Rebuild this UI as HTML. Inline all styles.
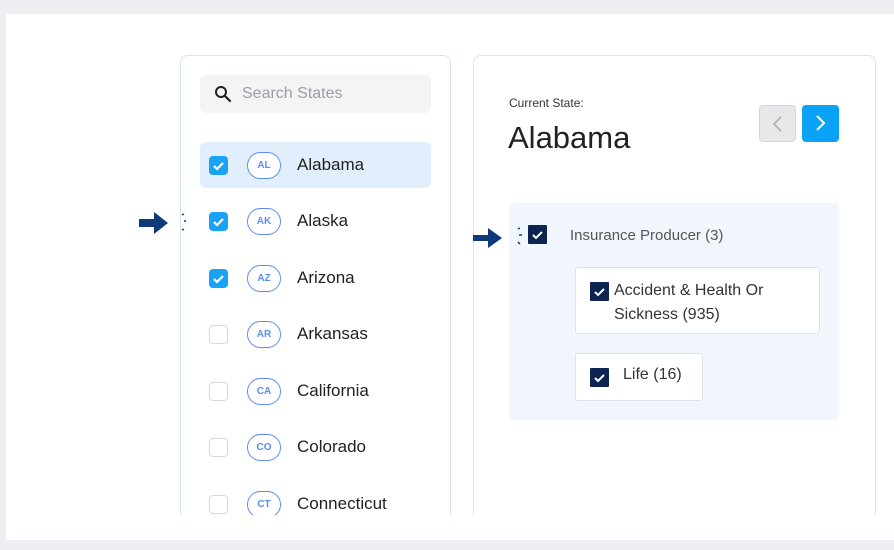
<!DOCTYPE html>
<html><head><style>
*{margin:0;padding:0;box-sizing:border-box}
body{width:894px;height:550px;background:#eceef2;font-family:"Liberation Sans",sans-serif;position:relative;overflow:hidden}
.card{position:absolute;left:6px;top:14px;width:888px;height:526px;background:#fff}
.clip{position:absolute;left:0;top:0;width:894px;height:515px;overflow:hidden}
.lp{position:absolute;left:180px;top:55px;width:271px;height:500px;border:1px solid #d6e4f2;border-radius:8px}
.rp{position:absolute;left:473px;top:55px;width:403px;height:500px;border:1px solid #dde3ea;border-radius:8px}
.search{position:absolute;left:200px;top:75px;width:231px;height:38px;background:#f3f4f6;border-radius:6px;color:#9a9ea5;font-size:16px;line-height:38px;padding-left:42px}
.row{position:absolute;left:200px;width:231px;height:46px;border-radius:6px}
.row.sel{background:#e1effd}
.cb{position:absolute;left:9px;top:14px;width:19px;height:19px;border-radius:4px;border:1px solid #d6d9de;background:#fff}
.cb.on{background:#1aa3f5;border-color:#1aa3f5}
.badge{position:absolute;left:47px;top:10px;width:34px;height:27px;border:1.5px solid #5b8ef0;border-radius:14px;font-size:10px;font-weight:bold;color:#5b8ef0;display:flex;align-items:center;justify-content:center}
.nm{position:absolute;left:97px;top:0;line-height:46px;font-size:17px;color:#222}
.dk{position:absolute;width:19px;height:19px;background:#0d2350;border-radius:1px}
</style></head><body>
<div class="card"></div>
<div class="clip">
<div class="lp"></div>
<div class="rp"></div>
<div class="search">Search States</div>
<svg style="position:absolute;left:214px;top:85px" width="18" height="18" viewBox="0 0 18 18"><circle cx="7" cy="7" r="5" fill="none" stroke="#222" stroke-width="2"/><path d="M11 11l5 5" stroke="#222" stroke-width="2.2" stroke-linecap="round"/></svg>

<div class="row sel" style="top:142px"><div class="cb on"><svg width="17" height="17" viewBox="0 0 17 17"><path d="M4 9l3 3 6-6" fill="none" stroke="#fff" stroke-width="2.2"/></svg></div><div class="badge" style="background:#fff">AL</div><div class="nm">Alabama</div></div>
<div class="row" style="top:198px"><div class="cb on"><svg width="17" height="17" viewBox="0 0 17 17"><path d="M4 9l3 3 6-6" fill="none" stroke="#fff" stroke-width="2.2"/></svg></div><div class="badge">AK</div><div class="nm">Alaska</div></div>
<div class="row" style="top:255px"><div class="cb on"><svg width="17" height="17" viewBox="0 0 17 17"><path d="M4 9l3 3 6-6" fill="none" stroke="#fff" stroke-width="2.2"/></svg></div><div class="badge">AZ</div><div class="nm">Arizona</div></div>
<div class="row" style="top:311px"><div class="cb"></div><div class="badge">AR</div><div class="nm">Arkansas</div></div>
<div class="row" style="top:368px"><div class="cb"></div><div class="badge">CA</div><div class="nm">California</div></div>
<div class="row" style="top:424px"><div class="cb"></div><div class="badge">CO</div><div class="nm">Colorado</div></div>
<div class="row" style="top:481px"><div class="cb"></div><div class="badge">CT</div><div class="nm">Connecticut</div></div>

<svg style="position:absolute;left:138px;top:210px" width="52" height="26" viewBox="0 0 52 26"><path d="M1 9h15V2l14 11-14 11v-7H1z" fill="#0d3a78"/><path d="M44 5l2-1M46 11h2M44 19l2 1" stroke="#0d3a78" stroke-width="1.5"/></svg>

<div style="position:absolute;left:509px;top:96px;font-size:12px;color:#333">Current State:</div>
<div style="position:absolute;left:508px;top:120px;font-size:31px;color:#222">Alabama</div>
<div style="position:absolute;left:759px;top:105px;width:37px;height:37px;background:#e6e8ea;border:1px solid #d4d7da;border-radius:4px"><svg width="37" height="37" viewBox="0 0 37 37"><path d="M21 11l-7 7 7 7" fill="none" stroke="#b0b4b8" stroke-width="1.8"/></svg></div>
<div style="position:absolute;left:802px;top:105px;width:37px;height:37px;background:#0aa2f5;border-radius:4px"><svg width="37" height="37" viewBox="0 0 37 37"><path d="M15 11l7 7-7 7" fill="none" stroke="#fff" stroke-width="2"/></svg></div>

<div style="position:absolute;left:509px;top:203px;width:330px;height:217px;background:#f1f6fd;border-radius:6px"></div>
<svg style="position:absolute;left:472px;top:225px" width="60" height="26" viewBox="0 0 60 26"><path d="M1 10h15V3l14 10-14 10v-7H1z" fill="#0d3a78"/><path d="M46 4l2-1M47 10h3M46 17l2 2" stroke="#0d3a78" stroke-width="1.5"/></svg>
<div class="dk" style="left:528px;top:225px"><svg width="19" height="19" viewBox="0 0 19 19"><path d="M5 10l3 3 6-6" fill="none" stroke="#fff" stroke-width="2"/></svg></div>
<div style="position:absolute;left:570px;top:227px;font-size:15px;color:#555">Insurance Producer (3)</div>

<div style="position:absolute;left:575px;top:267px;width:245px;height:67px;background:#fff;border:1px solid #dfe3e8;border-radius:3px"></div>
<div class="dk" style="left:590px;top:282px"><svg width="19" height="19" viewBox="0 0 19 19"><path d="M5 10l3 3 6-6" fill="none" stroke="#fff" stroke-width="2"/></svg></div>
<div style="position:absolute;left:614px;top:279px;font-size:16px;color:#333;line-height:24px">Accident &amp; Health Or<br>Sickness (935)</div>

<div style="position:absolute;left:575px;top:353px;width:128px;height:48px;background:#fff;border:1px solid #dfe3e8;border-radius:3px"></div>
<div class="dk" style="left:590px;top:368px"><svg width="19" height="19" viewBox="0 0 19 19"><path d="M5 10l3 3 6-6" fill="none" stroke="#fff" stroke-width="2"/></svg></div>
<div style="position:absolute;left:623px;top:366px;font-size:16px;color:#333">Life (16)</div>
</div>
</body></html>
